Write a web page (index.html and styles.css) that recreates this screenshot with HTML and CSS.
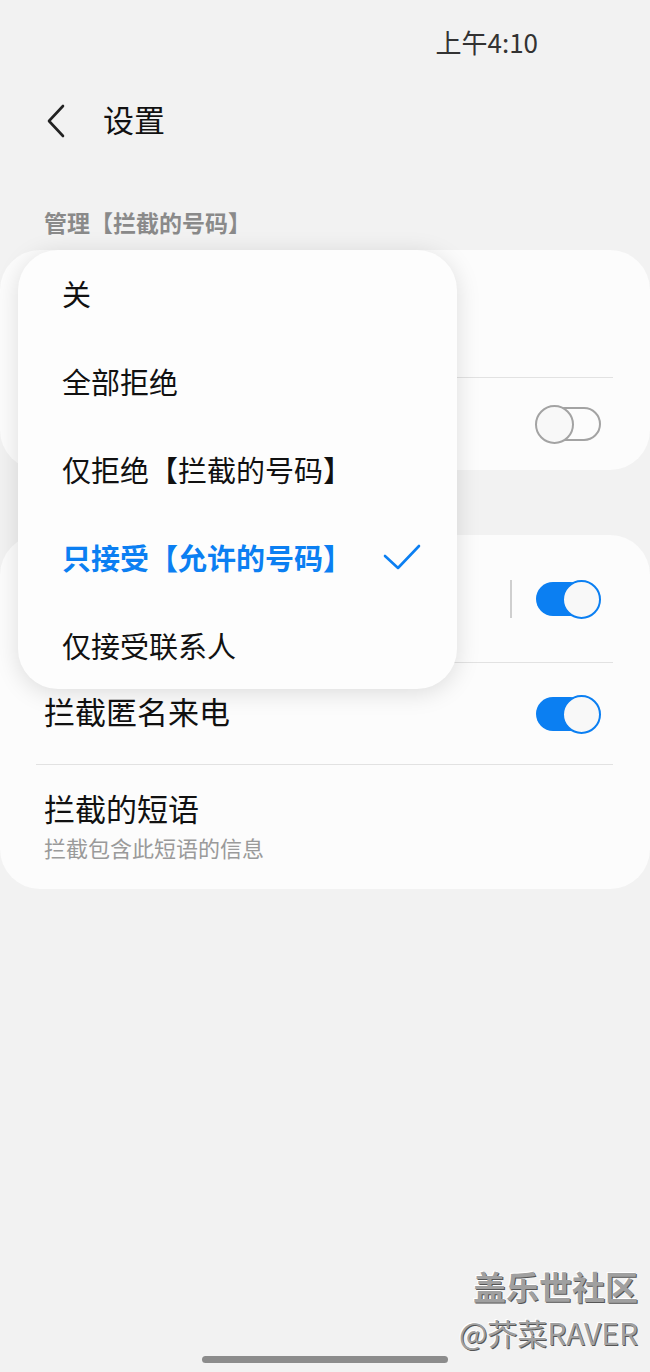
FILE: index.html
```html
<!DOCTYPE html>
<html lang="zh-CN">
<head>
    <meta charset="UTF-8">
    <meta name="viewport" content="width=device-width, initial-scale=1.0">
    <title>设置</title>
    <link rel="stylesheet" href="styles.css">
</head>
<body>
    <div class="page">
        <div class="status-bar">
            <span class="time">上午4:10</span>
        </div>

        <div class="header">
            <svg class="back" width="20" height="34" viewBox="0 0 20 34">
                <path d="M17 2 L3 17 L17 32" fill="none" stroke="#222" stroke-width="2.6" stroke-linecap="round" stroke-linejoin="round"/>
            </svg>
            <h1 class="title">设置</h1>
        </div>

        <div class="section-label">管理【拦截的号码】</div>

        <div class="cards">
            <div class="card">
                <div class="row row-tall"></div>
                <div class="divider"></div>
                <div class="row row-short">
                    <div class="switch">
                        <span class="track"></span>
                        <span class="knob"></span>
                    </div>
                </div>
            </div>

            <div class="card card-second">
                <div class="row row-tall">
                    <span class="vline"></span>
                    <div class="switch on">
                        <span class="track"></span>
                        <span class="knob"></span>
                    </div>
                </div>
                <div class="divider"></div>
                <div class="row row-mid">
                    <span class="row-title">拦截匿名来电</span>
                    <div class="switch on">
                        <span class="track"></span>
                        <span class="knob"></span>
                    </div>
                </div>
                <div class="divider"></div>
                <div class="row row-text">
                    <span class="row-title">拦截的短语</span>
                    <span class="row-sub">拦截包含此短语的信息</span>
                </div>
            </div>

            <!-- popup menu over the first card -->
            <ul class="menu">
                <li>关</li>
                <li>全部拒绝</li>
                <li>仅拒绝【拦截的号码】</li>
                <li class="selected">
                    只接受【允许的号码】
                    <svg class="check" width="38" height="30" viewBox="0 0 38 30">
                        <path d="M2 13 L15 25 L36 3" fill="none" stroke="#0b7ff2" stroke-width="2.6" stroke-linecap="round" stroke-linejoin="round"/>
                    </svg>
                </li>
                <li>仅接受联系人</li>
            </ul>
        </div>

        <div class="footer">
            <div class="watermark">
                <div class="wm-big">盖乐世社区</div>
                <div class="wm-small">@芥菜RAVER</div>
            </div>
            <div class="home-bar"></div>
        </div>
    </div>
</body>
</html>
```

FILE: styles.css
```css
body {
    margin: 0;
    background-color: #f2f2f2;
    font-family: "Noto Sans CJK SC", "Noto Sans", sans-serif;
    color: #111;
}

.page {
    height: 1372px;
    display: flex;
    flex-direction: column;
}

.status-bar {
    height: 84px;
    display: flex;
    align-items: center;
    justify-content: flex-end;
    padding-right: 112px;
}

.time {
    font-size: 26px;
    color: #333;
    line-height: 1;
}

.header {
    height: 74px;
    display: flex;
    align-items: center;
    padding-left: 46px;
}

.back {
    display: block;
}

.title {
    margin: 0 0 5px 37px;
    font-size: 31px;
    font-weight: normal;
    line-height: 1;
    color: #111;
}

.section-label {
    margin-top: 42px;
    height: 50px;
    line-height: 45px;
    padding-left: 44px;
    font-size: 23px;
    font-weight: bold;
    color: #8a8a8a;
}

.cards {
    position: relative;
}

.card {
    background-color: #fcfcfc;
    border-radius: 40px;
}

.card-second {
    margin-top: 65px;
}

.row {
    display: flex;
    align-items: center;
    justify-content: flex-end;
    padding: 0 49px 0 44px;
}

.row-tall {
    height: 127px;
}

.row-short {
    height: 92px;
}

.row-mid {
    height: 101px;
    justify-content: space-between;
}

.row-mid .row-title {
    margin-bottom: 5px;
}

.row-text {
    height: 124px;
    flex-direction: column;
    align-items: flex-start;
    justify-content: flex-start;
    padding-top: 23px;
    box-sizing: border-box;
}

.row-title {
    font-size: 31px;
    line-height: 40px;
    color: #111;
}

.row-sub {
    margin-top: 4px;
    font-size: 22px;
    line-height: 30px;
    color: #9a9a9a;
}

.divider {
    height: 1px;
    margin: 0 37px 0 36px;
    background-color: #e2e2e2;
}

.vline {
    width: 2px;
    height: 38px;
    background-color: #cfcfcf;
    margin-right: 23px;
}

/* toggle */
.switch {
    position: relative;
    width: 66px;
    height: 40px;
}

.track {
    position: absolute;
    top: 3px;
    left: 13px;
    right: 0;
    height: 34px;
    box-sizing: border-box;
    border: 2px solid #a3a3a3;
    border-radius: 17px;
}

.knob {
    position: absolute;
    top: 1px;
    left: 0;
    width: 39px;
    height: 39px;
    box-sizing: border-box;
    border: 2px solid #a3a3a3;
    border-radius: 50%;
    background-color: #f8f8f8;
}

.switch.on .track {
    left: 1px;
    right: 14px;
    border: none;
    background-color: #0b7ff2;
}

.switch.on .knob {
    left: auto;
    right: 0;
    border-color: #0b7ff2;
}

/* popup */
.menu {
    position: absolute;
    top: 0;
    left: 18px;
    width: 439px;
    height: 439px;
    margin: 0;
    padding: 1px 0 0;
    box-sizing: border-box;
    list-style: none;
    background-color: #fdfdfd;
    border-radius: 40px;
    box-shadow: 0 4px 24px rgba(0, 0, 0, 0.13);
}

.menu li {
    height: 88px;
    box-sizing: border-box;
    display: flex;
    align-items: center;
    justify-content: space-between;
    padding: 0 36px 4px 44px;
    font-size: 29px;
    color: #111;
}

.menu li.selected {
    color: #0b7ff2;
    font-weight: bold;
}

.check {
    display: block;
    margin-top: 2px;
}

/* bottom */
.footer {
    margin-top: auto;
    display: flex;
    flex-direction: column;
    align-items: center;
}

.watermark {
    align-self: flex-end;
    padding-right: 12px;
    text-align: right;
    color: #a0a0a0;
    text-shadow: 1px 1px 0 #555, -1px -1px 0 #fff;
}

.wm-big {
    font-size: 33px;
    font-weight: bold;
    line-height: 48px;
}

.wm-small {
    font-size: 30px;
    line-height: 44px;
}

.home-bar {
    width: 246px;
    height: 7px;
    margin: 2px 0 9px;
    border-radius: 4px;
    background-color: #8c8c8c;
}
```
